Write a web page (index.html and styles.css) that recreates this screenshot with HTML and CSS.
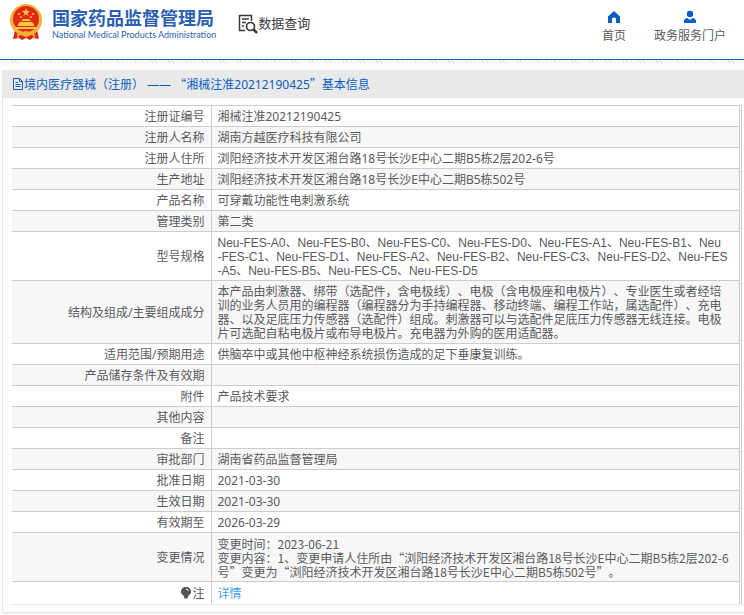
FILE: index.html
```html
<!DOCTYPE html>
<html lang="zh-CN">
<head>
    <meta charset="UTF-8">
    <meta name="viewport" content="width=device-width, initial-scale=1.0">
    <title>国家药品监督管理局 数据查询</title>
    <link rel="stylesheet" href="styles.css">
</head>
<body>
    <header class="header">
        <a class="logo" href="#">
            <svg class="emblem" viewBox="0 0 34 38">
                <path d="M6 26 L28 26 L30 35 L24 34 L21 36 L17 34 L13 36 L10 34 L4 35 Z" fill="#d9261c"/>
                <circle cx="17" cy="16" r="16" fill="#f0b23c"/>
                <circle cx="17" cy="15" r="13" fill="#e02a15"/>
                <path d="M17 4 l1 3 h3 l-2.400 2 l1 3 l-2.600-2 l-2.600 2 l1-3 l-2.400-2 h3 Z" fill="#f8c63f"/>
                <g fill="#f8c63f">
                    <circle cx="10" cy="10" r="1"/>
                    <circle cx="24" cy="10" r="1"/>
                    <circle cx="12" cy="13" r="1"/>
                    <circle cx="22" cy="13" r="1"/>
                    <path d="M12 17 L14 15 H20 L22 17 Z"/>
                    <path d="M9 20 L11 18 H23 L25 20 V22 H9 Z"/>
                    <path d="M6 23 H28 L27 25 H7 Z"/>
                </g>
                <circle cx="17" cy="30" r="3" fill="#f0b23c"/>
                <path d="M8 31 Q13 28 17 31 Q21 28 26 31 M10 31 L8 35 M24 31 L26 35" fill="none" stroke="#f0b23c" stroke-width="1.500"/>
            </svg>
            <span class="logo-text">
                <span class="logo-cn">国家药品监督管理局</span>
                <span class="logo-en">National Medical Products Administration</span>
            </span>
        </a>
        <a class="query" href="#">
            <svg class="query-icon" viewBox="0 0 20 20" fill="none" stroke="#38383f">
                <path d="M7 16.500 H1.500 V1.500 H13.500 V7" stroke-width="1.500"/>
                <path d="M4 5 H11 M4 8.500 H8 M4 12 H6" stroke-width="1.300"/>
                <circle cx="12.500" cy="12.500" r="4" stroke-width="1.700"/>
                <path d="M15.500 15.500 L19 19" stroke-width="2.500"/>
            </svg>
            <span>数据查询</span>
        </a>
        <nav class="nav">
            <a class="nav-item" href="#">
                <svg class="nav-icon" viewBox="0 0 14 14" fill="#0a5fc4">
                    <path d="M7 1 L13 6.500 V13 H9 V9 Q9 7.500 7 7.500 Q5 7.500 5 9 V13 H1 V6.500 Z"/>
                </svg>
                <span>首页</span>
            </a>
            <a class="nav-item" href="#">
                <svg class="nav-icon" viewBox="0 0 14 14" fill="#0a5fc4">
                    <circle cx="7" cy="4" r="3.200"/>
                    <path d="M1 13 V11 Q1 8.500 4.500 8 L7 10 L9.500 8 Q13 8.500 13 11 V13 Z"/>
                </svg>
                <span>政务服务门户</span>
            </a>
        </nav>
    </header>

    <main class="content">
        <div class="panel">
            <h1 class="title">
                <svg class="title-icon" viewBox="0 0 12 12" fill="none" stroke="#0a5fc4">
                    <path d="M1.500 0.500 H7.500 L10.500 3.500 V11.500 H1.500 Z M7.500 0.500 V3.500 H10.500 M3.500 4.500 H6 M3.500 6.500 H8.500 M3.500 8.500 H8.500"/>
                </svg>
                <span>境内医疗器械（注册） —— <span class="quote">“</span>湘械注准20212190425<span class="quote">”</span>基本信息</span>
            </h1>
            <div class="table-wrap">
                <table class="info">
                    <tbody>
                        <tr><th scope="row">注册证编号</th><td>湘械注准20212190425</td></tr>
                        <tr><th scope="row">注册人名称</th><td>湖南方越医疗科技有限公司</td></tr>
                        <tr><th scope="row">注册人住所</th><td>浏阳经济技术开发区湘台路18号长沙E中心二期B5栋2层202-6号</td></tr>
                        <tr><th scope="row">生产地址</th><td>浏阳经济技术开发区湘台路18号长沙E中心二期B5栋502号</td></tr>
                        <tr><th scope="row">产品名称</th><td>可穿戴功能性电刺激系统</td></tr>
                        <tr><th scope="row">管理类别</th><td>第二类</td></tr>
                        <tr>
                            <th scope="row">型号规格</th>
                            <td class="models">Neu-FES-A0、Neu-FES-B0、Neu-FES-C0、Neu-FES-D0、Neu-FES-A1、Neu-FES-B1、Neu<br>-FES-C1、Neu-FES-D1、Neu-FES-A2、Neu-FES-B2、Neu-FES-C3、Neu-FES-D2、Neu-FES<br>-A5、Neu-FES-B5、Neu-FES-C5、Neu-FES-D5</td>
                        </tr>
                        <tr>
                            <th scope="row">结构及组成/主要组成成分</th>
                            <td>本产品由刺激器、绑带（选配件，含电极线）、电极（含电极座和电极片）、专业医生或者经培训的业务人员用的编程器（编程器分为手持编程器、移动终端、编程工作站，属选配件）、充电器、以及足底压力传感器（选配件）组成。刺激器可以与选配件足底压力传感器无线连接。电极片可选配自粘电极片或布导电极片。充电器为外购的医用适配器。</td>
                        </tr>
                        <tr><th scope="row">适用范围/预期用途</th><td>供脑卒中或其他中枢神经系统损伤造成的足下垂康复训练。</td></tr>
                        <tr><th scope="row">产品储存条件及有效期</th><td></td></tr>
                        <tr><th scope="row">附件</th><td>产品技术要求</td></tr>
                        <tr><th scope="row">其他内容</th><td></td></tr>
                        <tr><th scope="row">备注</th><td></td></tr>
                        <tr><th scope="row">审批部门</th><td>湖南省药品监督管理局</td></tr>
                        <tr><th scope="row">批准日期</th><td>2021-03-30</td></tr>
                        <tr><th scope="row">生效日期</th><td>2021-03-30</td></tr>
                        <tr><th scope="row">有效期至</th><td>2026-03-29</td></tr>
                        <tr>
                            <th scope="row">变更情况</th>
                            <td class="changes">变更时间：2023-06-21<br>变更内容：1、变更申请人住所由“浏阳经济技术开发区湘台路18号长沙E中心二期B5栋2层202-6<br>号”变更为“浏阳经济技术开发区湘台路18号长沙E中心二期B5栋502号”。</td>
                        </tr>
                        <tr class="note">
                            <th scope="row"><svg class="bulb" viewBox="0 0 10 12"><path d="M5 0 A4.500 4.500 0 0 1 7.500 8.500 L6.500 11.500 H3.500 L2.500 8.500 A4.500 4.500 0 0 1 5 0 Z" fill="#555"/><path d="M5 2 Q7 2 7.500 4" fill="none" stroke="#fff"/></svg>注</th>
                            <td><a class="detail" href="#">详情</a></td>
                        </tr>
                    </tbody>
                </table>
            </div>
        </div>
    </main>
</body>
</html>
```
FILE: styles.css
```css
* {
    box-sizing: border-box;
}
body {
    margin: 0;
    background: #f8f8f8;
    color: #585a5e;
    font-family: "Noto Sans", "Noto Sans CJK SC", sans-serif;
    font-size: 12px;
    line-height: 14px;
    text-spacing-trim: space-all;
}
a {
    color: inherit;
    text-decoration: none;
}
.header {
    display: flex;
    align-items: flex-start;
    height: 60px;
    padding: 0 18px 0 9px;
    background: #fff;
    border-bottom: 1px solid #0a5fc4;
}
.logo {
    display: flex;
    gap: 9px;
    padding-top: 4px;
    color: #2b5fb3;
}
.emblem {
    width: 34px;
    height: 38px;
}
.logo-text {
    display: flex;
    flex-direction: column;
    padding-top: 2px;
    white-space: nowrap;
}
.logo-cn {
    font-size: 18px;
    font-weight: bold;
    line-height: 24px;
}
.logo-en {
    font-family: Lato, sans-serif;
    font-size: 9px;
    line-height: 10px;
}
.query {
    display: flex;
    margin-left: 22px;
    padding-top: 13px;
    color: #38383f;
    font-size: 13px;
    line-height: 20px;
}
.query-icon {
    width: 20px;
    height: 22px;
}
.nav {
    display: flex;
    gap: 28px;
    margin-left: auto;
    padding-top: 10px;
}
.nav-item {
    display: flex;
    flex-direction: column;
    align-items: center;
    gap: 4px;
    line-height: 16px;
}
.nav-icon {
    width: 14px;
    height: 14px;
}
/* hatched strip under the header */
.content {
    padding: 10px 0 0 2px;
    background: repeating-linear-gradient(45deg, #e2e2e2 0 1px, #fff 1px 3px) top / 100% 3px no-repeat, #fdfdfd;
}
.panel {
    padding-bottom: 7px;
    background: #fff;
    border-left: 1px solid #e6e6e6;
    border-bottom: 1px solid #e2e2e2;
}
.title {
    display: flex;
    align-items: center;
    height: 28px;
    margin: 0;
    padding: 1px 0 0 9px;
    background: #e9e9e9;
    border-bottom: 1px solid #e6e8f2;
    color: #0a5fc4;
    font-size: 12px;
    font-weight: normal;
}
.title-icon {
    width: 12px;
    height: 12px;
}
.quote {
    font-family: "Noto Sans CJK SC", sans-serif;
}
.table-wrap {
    margin: 7px 2px 0 9px;
    padding-right: 1px;
    border-right: 1px solid #ccc;
}
.info {
    width: 100%;
    border-collapse: collapse;
    border-top: 1px solid #ccc;
}
.info th,
.info td {
    height: 21px;
    padding: 4px 7px 2px 6px;
    border: 1px solid #ccc;
    vertical-align: middle;
}
.info th {
    width: 199px;
    padding-right: 6px;
    border-left: 0;
    font-weight: normal;
    text-align: right;
}
.info tr:nth-child(even) {
    background: #f7f7f7;
}
.info .models {
    font-family: "Liberation Sans", "Noto Sans CJK SC", sans-serif;
}
.info .changes {
    font-family: "Noto Sans CJK SC", sans-serif;
}
.info .note {
    background: #fff;
}
.info .note th,
.info .note td {
    height: 23px;
    border-bottom-color: #e6e8f2;
}
.bulb {
    width: 10px;
    height: 12px;
    margin-right: 1px;
    vertical-align: top;
}
.detail {
    color: #409eff;
}
```
